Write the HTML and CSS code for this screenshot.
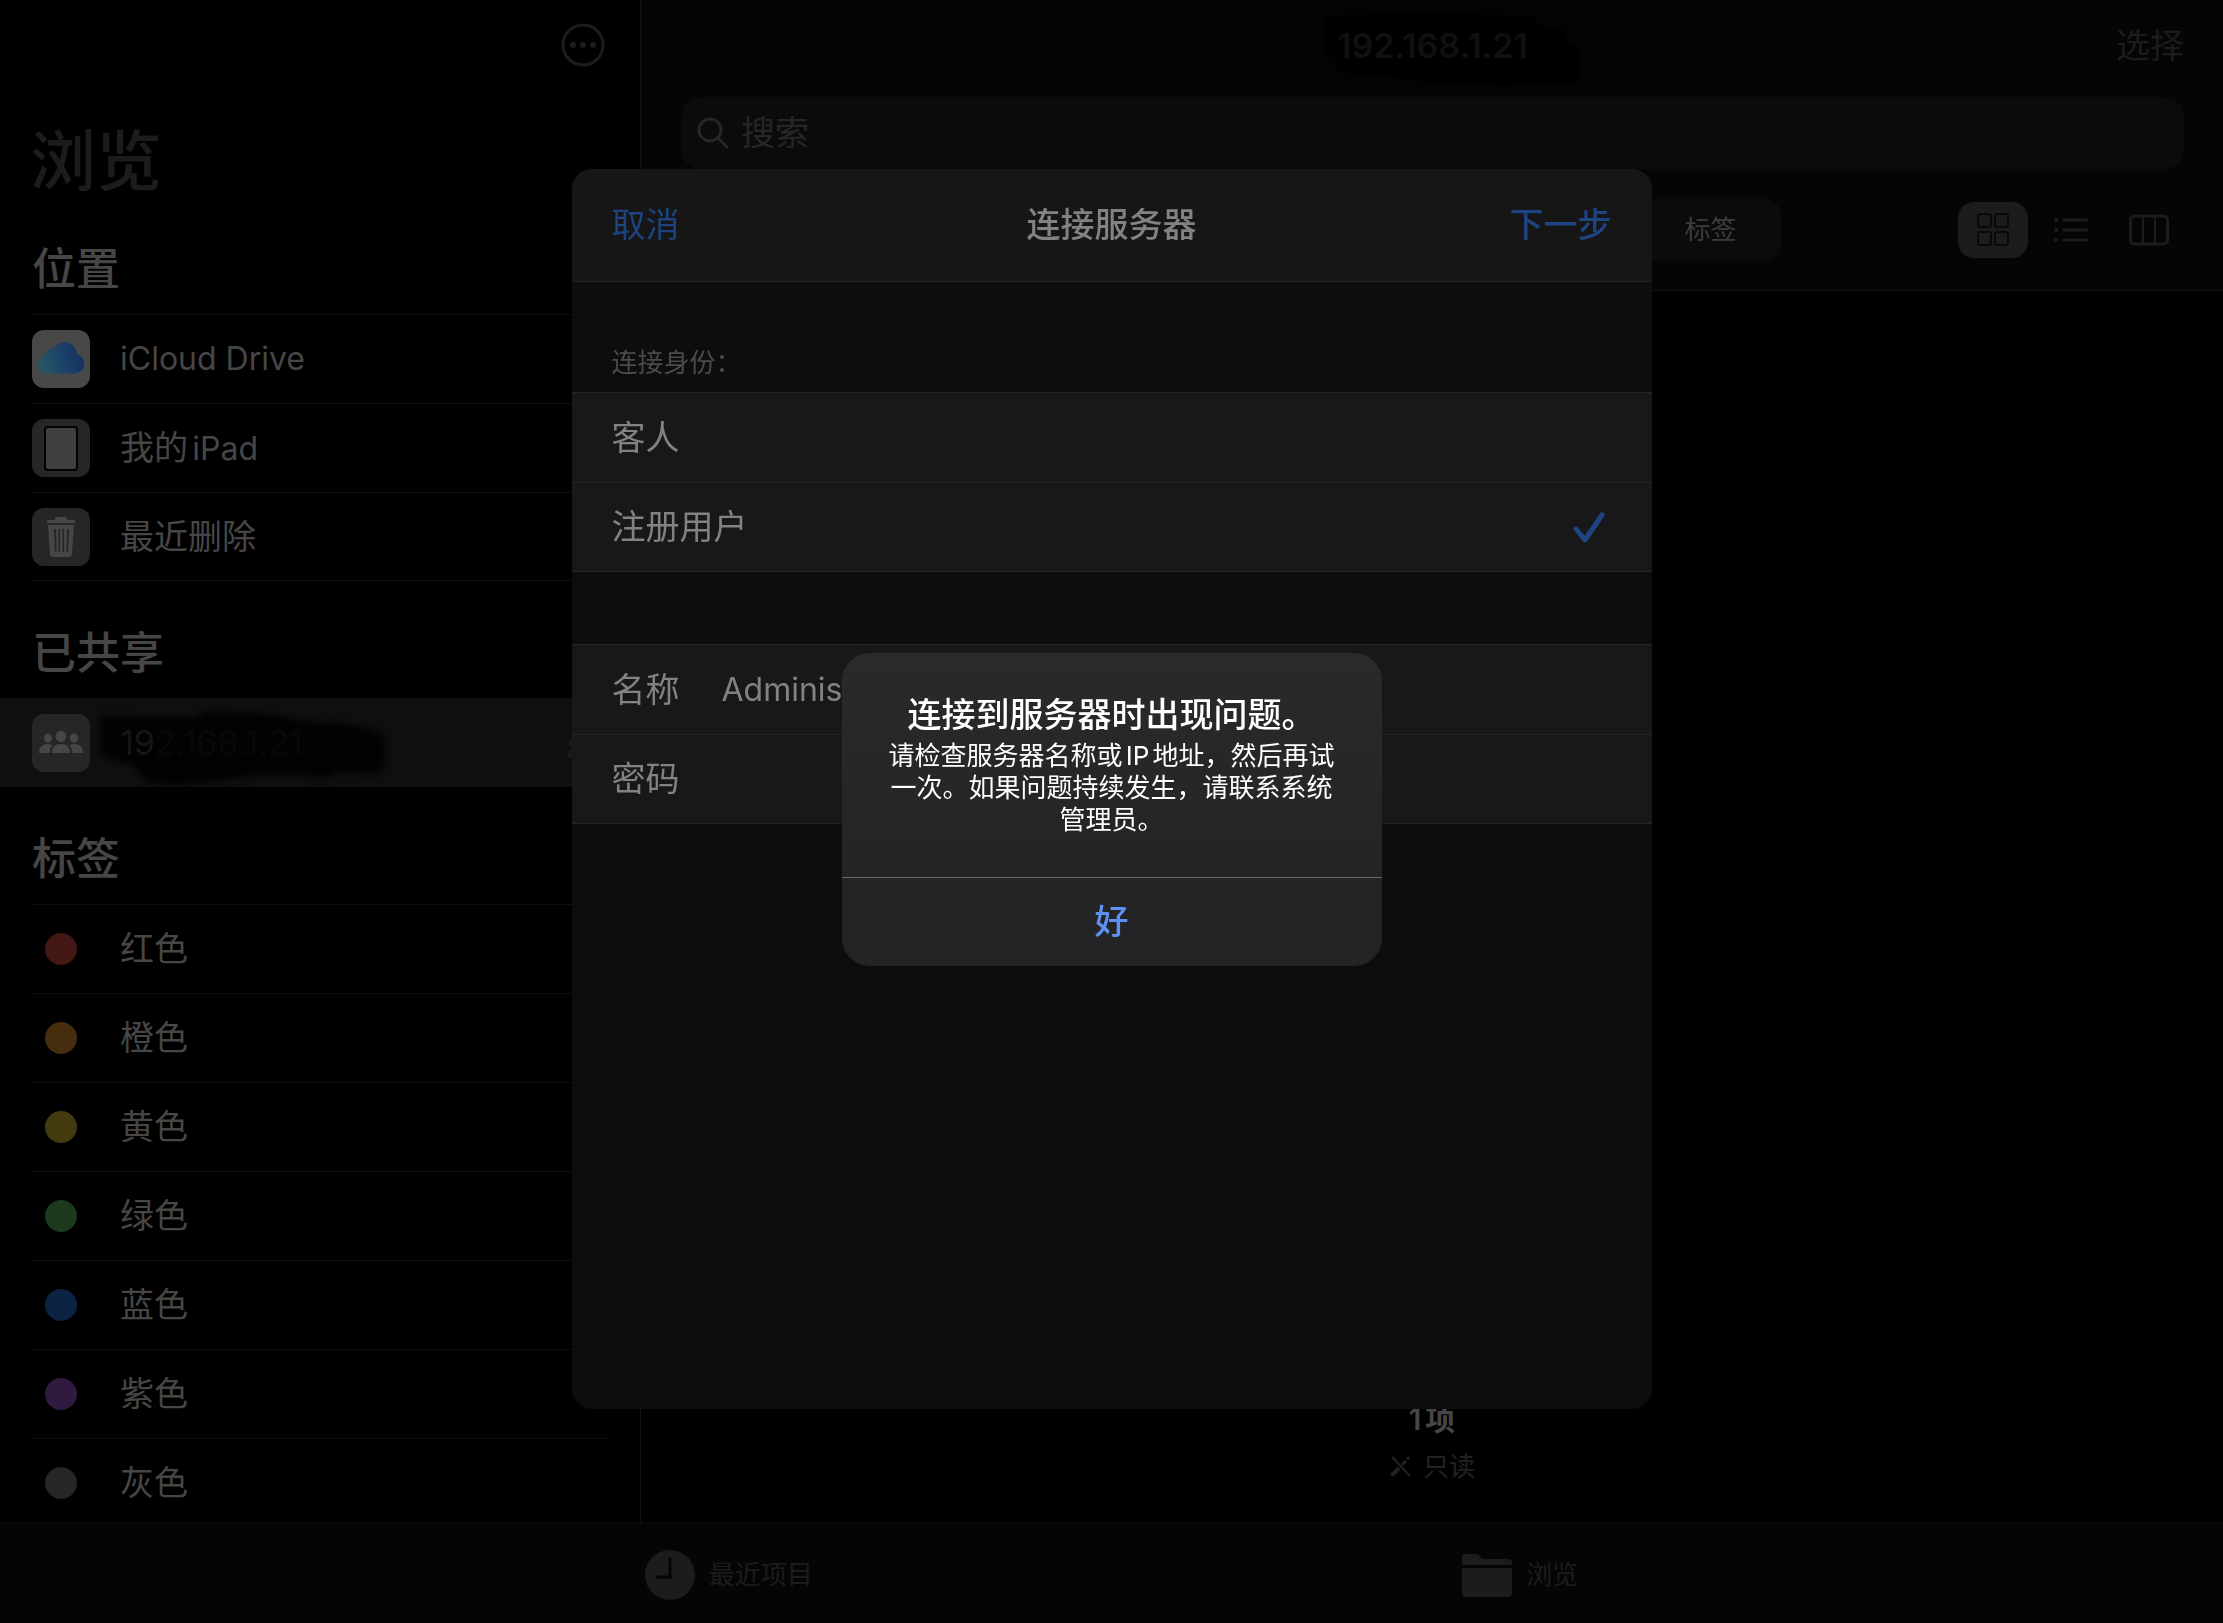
FILE: index.html
```html
<!DOCTYPE html>
<html lang="zh-CN">
<head>
<meta charset="utf-8">
<meta name="viewport" content="width=device-width, initial-scale=1">
<title>文件</title>
<link rel="stylesheet" href="styles.css">
</head>
<body>
<div class="app">
  <div class="split">
    <nav class="sidebar">
      <div class="sidebar-bar">
        <button class="icon-button" type="button" aria-label="更多">
          <svg width="44" height="44" viewBox="0 0 44 44"><circle cx="22" cy="22" r="20" fill="none" stroke="currentColor" stroke-width="3"/><circle cx="12" cy="22" r="3" fill="currentColor"/><circle cx="22" cy="22" r="3" fill="currentColor"/><circle cx="32" cy="22" r="3" fill="currentColor"/></svg>
        </button>
      </div>
      <h1 class="sidebar-title">浏览</h1>

      <h2 class="section-title">位置</h2>
      <ul class="list ruled closed">
        <li><a class="item" href="#icloud">
          <span class="badge cloud"><svg width="58" height="58" viewBox="0 0 58 58"><defs><linearGradient id="sky" x1="0" x2="1" y1="0.6" y2="0.4"><stop offset="0" stop-color="#2a5763"/><stop offset="0.5" stop-color="#1c426a"/><stop offset="1" stop-color="#142f5e"/></linearGradient></defs><path fill="url(#sky)" d="M14 43.500A9 9 0 0 1 12 26A8 8 0 0 1 21.500 19A12.500 12.500 0 0 1 45 24A10 10 0 0 1 44 43.500Z"/></svg></span>
          <span class="latin">iCloud Drive</span></a></li>
        <li><a class="item" href="#ipad">
          <span class="badge"><svg width="58" height="58" viewBox="0 0 58 58"><rect x="13" y="8" width="32" height="43" rx="3" fill="#404042" stroke="#020202" stroke-width="2"/></svg></span>
          <span>我的<span class="latin">iPad</span></span></a></li>
        <li><a class="item" href="#trash">
          <span class="badge"><svg width="58" height="58" viewBox="0 0 58 58" fill="#464646"><path d="M15 12.500Q15 12 16 12H23V11Q23 9 25 9H33Q35 9 35 11V12H42Q43 12 43 13V15H15Z"/><path fill-rule="evenodd" d="M16 17H42L40 46Q40 49 37 49H21Q18 49 18 46ZM22 21L23 44H24.500L24 21ZM26.500 21V44H28V21ZM30.500 21V44H32V21ZM35 21L34.500 44H36L37 21Z"/></svg></span>
          <span>最近删除</span></a></li>
      </ul>

      <h2 class="section-title">已共享</h2>
      <ul class="list">
        <li><a class="item current" href="#server">
          <svg class="scribble" width="300" height="89" viewBox="0 0 300 89"><path d="M4 18Q5 17 16 18L100 20Q102 14 110 14Q160 12 210 24Q260 24 284 36Q288 40 287 60Q286 78 276 76L240 74Q236 81 218 79Q170 74 124 82Q96 88 58 86Q46 84 42 74Q36 72 36 66Q10 62 4 56Q0 40 4 18Z"/></svg>
          <span class="badge"><svg width="58" height="58" viewBox="0 0 58 58" fill="#464646"><ellipse cx="16" cy="24" rx="4" ry="4.500"/><ellipse cx="42" cy="24" rx="4" ry="4.500"/><path d="M7 39Q7 30 16 30Q19 30 20.500 31.500Q17.500 34.500 17.500 39ZM51 39Q51 30 42 30Q39 30 37.500 31.500Q40.500 34.500 40.500 39Z"/><ellipse cx="29" cy="22.500" rx="5.200" ry="5.800"/><path d="M20 39Q20 30 29 30T38 39Z"/></svg></span>
          <span class="masked"><span class="masked-head">19</span>2.168.1.21</span>
          <svg class="trail" width="36" height="28" viewBox="0 0 36 28"><circle cx="7" cy="9" r="5"/><path d="M0 24Q0 15 7 15T14 24Z"/></svg>
        </a></li>
      </ul>

      <h2 class="section-title">标签</h2>
      <ul class="list ruled">
        <li><a class="item" href="#red"><span class="dot red"></span><span>红色</span></a></li>
        <li><a class="item" href="#orange"><span class="dot orange"></span><span>橙色</span></a></li>
        <li><a class="item" href="#yellow"><span class="dot yellow"></span><span>黄色</span></a></li>
        <li><a class="item" href="#green"><span class="dot green"></span><span>绿色</span></a></li>
        <li><a class="item" href="#blue"><span class="dot blue"></span><span>蓝色</span></a></li>
        <li><a class="item" href="#purple"><span class="dot purple"></span><span>紫色</span></a></li>
        <li><a class="item" href="#gray"><span class="dot gray"></span><span>灰色</span></a></li>
      </ul>
    </nav>

    <main class="content">
      <header class="toolbar">
        <div class="toolbar-top">
          <h2 class="server-name">192.168.1.21
            <svg class="name-scribble" width="264" height="76" viewBox="0 0 264 76"><path d="M4 6L100 3L214 6L216 16L244 18L247 32L258 38L256 74L180 76L110 72L16 62L14 48L3 46Z"/></svg>
          </h2>
          <button class="select-button" type="button">选择</button>
        </div>
        <label class="search">
          <svg width="32" height="32" viewBox="0 0 32 32" fill="none" stroke="currentColor" stroke-width="3" stroke-linecap="round"><circle cx="13" cy="13" r="11"/><path d="M21 21L30 30"/></svg>
          <input type="search" placeholder="搜索" aria-label="搜索">
        </label>
        <div class="toolbar-row">
          <div class="segments"><button class="segment" type="button">标签</button></div>
          <div class="views">
            <button class="view active" type="button" aria-label="图标"><svg width="34" height="34" viewBox="0 0 34 34" fill="none" stroke="#090909" stroke-width="2"><rect x="2" y="1" width="13" height="13" rx="2"/><rect x="19" y="1" width="13" height="13" rx="2"/><rect x="2" y="19" width="13" height="13" rx="2"/><rect x="19" y="19" width="13" height="13" rx="2"/></svg></button>
            <button class="view" type="button" aria-label="列表"><svg width="36" height="28" viewBox="0 0 36 28" fill="none" stroke="currentColor" stroke-width="3" stroke-linecap="round"><path d="M11 4H34M11 14H34M11 24H34"/><path stroke-width="4" d="M3 4h.1M3 14h.1M3 24h.1"/></svg></button>
            <button class="view" type="button" aria-label="分栏"><svg width="40" height="32" viewBox="0 0 40 32" fill="none" stroke="currentColor" stroke-width="2"><rect x="1.500" y="2" width="37" height="28" rx="4" stroke-width="3"/><path d="M14 2V30M26 2V30"/></svg></button>
          </div>
        </div>
      </header>
      <footer class="status">
        <strong class="count">1项</strong>
        <span class="readonly"><svg width="22" height="22" viewBox="0 0 22 22" stroke="currentColor" fill="none"><path stroke-width="2" d="M3 1L21 20"/><path stroke-width="4" d="M2.500 19.500L10 12"/><path stroke-width="3" d="M13 9L17 5"/><path stroke-width="3" stroke-linecap="round" d="M19 2.500l.5-.5"/></svg>只读</span>
      </footer>
    </main>
  </div>

  <nav class="tabbar">
    <a class="tab" href="#recents"><svg width="50" height="50" viewBox="0 0 50 50"><circle cx="25" cy="25" r="25" fill="currentColor"/><path d="M25 9V27H12" fill="none" stroke="#050505" stroke-width="3" stroke-linecap="round"/></svg>最近项目</a>
    <a class="tab" href="#browse"><svg width="50" height="44" viewBox="0 0 50 44" fill="currentColor"><path d="M0 12V4Q0 1 3 1H15Q17 1 18.500 4Q19 6 21 6H46Q50 6 50 10V12Z"/><path d="M0 15H50V40Q50 44 46 44H4Q0 44 0 40Z"/></svg>浏览</a>
  </nav>
</div>

<div class="overlay sheet-layer">
  <form class="sheet" aria-label="连接服务器">
    <header class="sheet-bar">
      <button class="sheet-action" type="button">取消</button>
      <h2 class="sheet-title">连接服务器</h2>
      <button class="sheet-action next" type="button">下一步</button>
    </header>
    <p class="group-label" id="identity">连接身份：</p>
    <div class="group" role="radiogroup" aria-labelledby="identity">
      <label class="row">客人<input class="choice" type="radio" name="identity"></label>
      <label class="row">注册用户<input class="choice" type="radio" name="identity" checked><svg width="34" height="34" viewBox="0 0 34 34" fill="none" stroke="#1d4480" stroke-width="5" stroke-linecap="round" stroke-linejoin="round"><path d="M4 19L13 30L30 5"/></svg></label>
    </div>
    <div class="group credentials">
      <label class="row"><span class="field-name">名称</span><input class="field latin" type="text" value="Administrator"></label>
      <label class="row"><span class="field-name">密码</span><input class="field latin" type="password"></label>
    </div>
  </form>
</div>

<div class="overlay alert-layer">
  <div class="alert" role="alertdialog" aria-labelledby="alert-title" aria-describedby="alert-text">
    <div class="alert-body">
      <h2 class="alert-title" id="alert-title">连接到服务器时出现问题。</h2>
      <p class="alert-text" id="alert-text">请检查服务器名称或IP地址，然后再试一次。如果问题持续发生，请联系系统管理员。</p>
    </div>
    <button class="alert-button" type="button">好</button>
  </div>
</div>
</body>
</html>
```

FILE: styles.css
```css
* { box-sizing: border-box; }

body {
  margin: 0;
  background: #000;
  color: #464646;
  font: 34px/48px Inter, "Noto Sans CJK SC", sans-serif;
  text-autospace: normal;
  overflow: hidden;
}

h1, h2, p, ul { margin: 0; padding: 0; }
h1, h2 { font-weight: 500; }
ul { list-style: none; }
a { color: inherit; text-decoration: none; }
svg { display: block; flex: none; }
button, input {
  margin: 0;
  padding: 0;
  border: 0;
  background: none;
  color: inherit;
  font: inherit;
  outline: none;
}

.latin { font-size: 32px; }

.app { display: grid; grid-template-rows: minmax(0, 1fr) auto; height: 100vh; }
.split { display: grid; grid-template-columns: 641px minmax(0, 1fr); min-height: 0; }

/* Sidebar */
.sidebar { border-right: 1px solid #121212; overflow: hidden; }
.sidebar-bar { display: flex; justify-content: flex-end; padding: 23px 35px 0 0; height: 120px; }
.icon-button { height: 44px; color: #1c1c1c; }
.sidebar-title { padding-left: 30px; height: 77px; font-size: 66px; line-height: 82px; color: #1c1c1c; }
.section-title { padding: 47px 32px 20px; font-size: 44px; line-height: 50px; }
.ruled { margin: 0 32px; }
.ruled > li { border-top: 1px solid #0e0e0e; }
.ruled.closed { border-bottom: 1px solid #0e0e0e; }
.item { position: relative; display: flex; align-items: center; gap: 30px; height: 88px; }
.closed > li:last-child .item { height: 87px; }
.current { height: 89px; padding-left: 32px; background: #0f0f10; }
.badge { flex: none; width: 58px; height: 58px; border-radius: 12px; background: #262628; overflow: hidden; z-index: 1; }
.cloud { background: #484848; }
.dot { flex: none; width: 32px; height: 32px; margin: 0 13px; border-radius: 50%; }
.red { background: #431714; }
.orange { background: #452d0e; }
.yellow { background: #443a10; }
.green { background: #1b3a1e; }
.blue { background: #0b2444; }
.purple { background: #301a40; }
.gray { background: #262628; }
.scribble { position: absolute; left: 98px; top: 0; fill: #020202; filter: blur(3px); }
.masked { position: relative; color: #080808; }
.masked-head { color: #151515; }
.trail { position: absolute; left: 567px; top: 36px; fill: #181b16; }

/* File pane */
.content { display: flex; flex-direction: column; justify-content: space-between; min-width: 0; }
.toolbar { padding: 0 39px 29px 40px; background: #050505; border-bottom: 1px solid #111; }
.toolbar-top { display: grid; grid-template-columns: 1fr auto 1fr; align-items: center; height: 97px; padding-bottom: 5px; }
.server-name { position: relative; grid-column: 2; font-size: 34px; color: #101010; font-weight: 600; z-index: 0; }
.name-scribble { position: absolute; left: -16px; top: -12px; fill: #000; filter: blur(3px); z-index: -1; }
.select-button { justify-self: end; color: #1c1c1c; }
.search { display: flex; align-items: center; gap: 12px; height: 72px; padding: 0 16px; border-radius: 20px; background: #0b0b0b; color: #262626; }
.search input { flex: 1; height: 48px; appearance: none; }
.search input::placeholder { color: #262626; opacity: 1; }
.toolbar-row { display: grid; grid-template-columns: 1fr 696px 1fr; align-items: center; padding-top: 30px; }
.segments { grid-column: 2; display: flex; justify-content: flex-end; height: 62px; border-radius: 16px; background: #0b0b0b; }
.segment { width: 140px; font-size: 26px; color: #3c3c3c; }
.views { justify-self: end; display: flex; gap: 8px; color: #1c1c1c; }
.view { display: grid; place-items: center; width: 70px; height: 56px; border-radius: 16px; }
.active { background: #1c1c1c; }
.status { display: flex; flex-direction: column; align-items: center; gap: 10px; padding-bottom: 37px; }
.count { font-size: 30px; line-height: 40px; font-weight: 600; color: #464646; }
.readonly { display: flex; align-items: center; gap: 12px; font-size: 26px; line-height: 36px; color: #222; }

/* Bottom tabs */
.tabbar { display: flex; justify-content: space-between; padding: 0 29%; height: 101px; border-top: 1px solid #0b0b0b; background: #050505; }
.tab { display: flex; align-items: center; gap: 14px; padding-top: 4px; font-size: 26px; color: #1c1c1c; white-space: nowrap; }

/* Layers above the app */
.overlay { position: fixed; inset: 0; display: grid; place-items: center; }
.sheet-layer { padding-bottom: 45px; }
.alert-layer { padding-bottom: 4px; }
.sheet { width: 1080px; max-width: 100%; height: 1240px; max-height: 100%; border-radius: 20px; background: #0d0d0f; color: #828282; overflow: hidden; }
.sheet-bar { display: grid; grid-template-columns: 1fr auto 1fr; align-items: center; height: 113px; padding: 0 40px; background: #161616; border-bottom: 1px solid #252527; }
.sheet-title { font-size: 34px; }
.sheet-action { justify-self: start; color: #1d4480; }
.next { justify-self: end; font-weight: 500; }
.group-label { padding: 62px 40px 10px; font-size: 26px; line-height: 38px; color: #4b4b4e; }
.group { border-bottom: 1px solid #252527; background: #18181a; }
.row { display: flex; align-items: center; height: 90px; padding: 0 40px; border-top: 1px solid #252527; }
.group .row:last-child { height: 89px; }
.choice { flex: 1; appearance: none; }
.row svg { margin-right: 6px; }
.credentials { margin-top: 72px; }
.field-name { width: 110px; }
.field { flex: 1; min-width: 0; }

.alert { width: 540px; border-radius: 28px; background: linear-gradient(#2a2a2a, #242426 72%); color: #fff; overflow: hidden; }
.alert-body { padding: 36px 40px 41px; text-align: center; }
.alert-title { margin: 0 -8px; font-size: 34px; line-height: 51px; white-space: nowrap; }
.alert-text { font-size: 26px; line-height: 32px; }
.alert-button { display: block; width: 100%; height: 89px; border-top: 1px solid #68686a; color: #5e92f2; font-weight: 500; }
```
